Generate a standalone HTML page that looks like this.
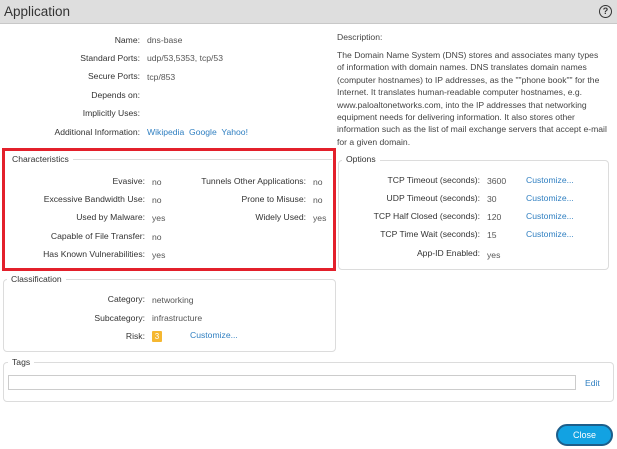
<!DOCTYPE html>
<html><head><meta charset="utf-8"><style>
*{margin:0;padding:0;box-sizing:border-box}
body{width:617px;height:449px;background:#fff;font-family:"Liberation Sans",sans-serif;font-size:8.6px;color:#444;position:relative;overflow:hidden}
.a{position:absolute;white-space:nowrap}
.l{text-align:right;color:#333}
.v{color:#555}
.k{color:#2f7fc1}
.box{position:absolute;border:1px solid #dcdcdc;border-radius:4px}
.lg{position:absolute;background:#fff;padding:0 4px;color:#333;font-size:8.6px}
</style></head><body>
<div class="a" style="left:0;top:0;width:617px;height:24px;background:#dedede;border-bottom:1px solid #c8c8c8"></div>
<div class="a" style="left:4px;top:4px;font-size:13.5px;color:#333">Application</div>
<div class="a" style="left:599px;top:5px;width:13px;height:13px;border:1.5px solid #333;border-radius:50%;font-size:9px;font-weight:bold;text-align:center;line-height:10px;color:#333">?</div>

<div class="a l" style="right:477px;top:35px">Name:</div><div class="a v" style="left:147px;top:35px">dns-base</div>
<div class="a l" style="right:477px;top:53px">Standard Ports:</div><div class="a v" style="left:147px;top:53px">udp/53,5353, tcp/53</div>
<div class="a l" style="right:477px;top:71px">Secure Ports:</div><div class="a v" style="left:147px;top:72px">tcp/853</div>
<div class="a l" style="right:477px;top:90px">Depends on:</div>
<div class="a l" style="right:477px;top:108px">Implicitly Uses:</div>
<div class="a l" style="right:477px;top:127px">Additional Information:</div><div class="a k" style="left:147px;top:127px">Wikipedia&nbsp; Google&nbsp; Yahoo!</div>

<div class="a" style="left:337px;top:32px;color:#444">Description:</div>
<div class="a" style="left:337px;top:49px;width:270px;white-space:normal;line-height:12.4px;font-size:8.6px;color:#444">The Domain Name System (DNS) stores and associates many types of information with domain names. DNS translates domain names (computer hostnames) to IP addresses, as the ""phone book"" for the Internet. It translates human-readable computer hostnames, e.g. www.paloaltonetworks.com, into the IP addresses that networking equipment needs for delivering information. It also stores other information such as the list of mail exchange servers that accept e-mail for a given domain.</div>

<div class="a" style="left:2px;top:148px;width:334px;height:123px;border:3px solid #e3202b"></div>
<div class="a" style="left:10px;top:159px;width:322px;height:1px;background:#ddd"></div>
<div class="lg" style="left:8px;top:154px">Characteristics</div>
<div class="a l" style="right:472px;top:176px">Evasive:</div><div class="a v" style="left:152px;top:177px">no</div>
<div class="a l" style="right:472px;top:194px">Excessive Bandwidth Use:</div><div class="a v" style="left:152px;top:195px">no</div>
<div class="a l" style="right:472px;top:212px">Used by Malware:</div><div class="a v" style="left:152px;top:213px">yes</div>
<div class="a l" style="right:472px;top:231px">Capable of File Transfer:</div><div class="a v" style="left:152px;top:232px">no</div>
<div class="a l" style="right:472px;top:249px">Has Known Vulnerabilities:</div><div class="a v" style="left:152px;top:250px">yes</div>
<div class="a l" style="right:311px;top:176px">Tunnels Other Applications:</div><div class="a v" style="left:313px;top:177px">no</div>
<div class="a l" style="right:311px;top:194px">Prone to Misuse:</div><div class="a v" style="left:313px;top:195px">no</div>
<div class="a l" style="right:311px;top:212px">Widely Used:</div><div class="a v" style="left:313px;top:213px">yes</div>

<div class="box" style="left:338px;top:160px;width:271px;height:110px"></div>
<div class="lg" style="left:342px;top:154px">Options</div>
<div class="a l" style="right:137px;top:175px">TCP Timeout (seconds):</div><div class="a v" style="left:487px;top:176px">3600</div><div class="a k" style="left:526px;top:175px">Customize...</div>
<div class="a l" style="right:137px;top:193px">UDP Timeout (seconds):</div><div class="a v" style="left:487px;top:194px">30</div><div class="a k" style="left:526px;top:193px">Customize...</div>
<div class="a l" style="right:137px;top:211px">TCP Half Closed (seconds):</div><div class="a v" style="left:487px;top:212px">120</div><div class="a k" style="left:526px;top:211px">Customize...</div>
<div class="a l" style="right:137px;top:229px">TCP Time Wait (seconds):</div><div class="a v" style="left:487px;top:230px">15</div><div class="a k" style="left:526px;top:229px">Customize...</div>
<div class="a l" style="right:137px;top:248px">App-ID Enabled:</div><div class="a v" style="left:487px;top:250px">yes</div>

<div class="box" style="left:3px;top:279px;width:333px;height:73px"></div>
<div class="lg" style="left:7px;top:274px">Classification</div>
<div class="a l" style="right:472px;top:294px">Category:</div><div class="a v" style="left:152px;top:295px">networking</div>
<div class="a l" style="right:472px;top:313px">Subcategory:</div><div class="a v" style="left:152px;top:313px">infrastructure</div>
<div class="a l" style="right:472px;top:331px">Risk:</div>
<div class="a" style="left:152px;top:331px;width:10px;height:11px;background:#f5b731;color:#fff;font-size:8px;text-align:center;line-height:11px;border-radius:1px">3</div>
<div class="a k" style="left:190px;top:330px">Customize...</div>

<div class="box" style="left:3px;top:362px;width:611px;height:40px"></div>
<div class="lg" style="left:8px;top:357px">Tags</div>
<div class="a" style="left:8px;top:375px;width:568px;height:15px;border:1px solid #ccc"></div>
<div class="a k" style="left:585px;top:378px">Edit</div>

<div class="a" style="left:556px;top:424px;width:57px;height:22px;border-radius:11px;background:#12a2e2;border:2px solid #1d5e8a;color:#fff;text-align:center;line-height:18px;font-size:9px">Close</div>
</body></html>
